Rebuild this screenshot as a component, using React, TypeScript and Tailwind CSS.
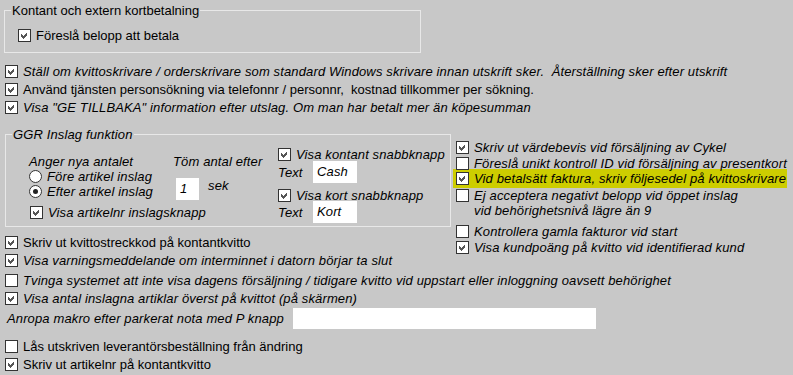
import type { ReactNode } from 'react'

function Box({ checked }: { checked?: boolean }) {
  return (
    <span className="flex h-[13px] w-[13px] shrink-0 items-center justify-center border border-[#333333] bg-white">
      {checked && (
        <svg width="7" height="7" viewBox="0 0 7 7" shapeRendering="crispEdges">
          <polygon points="0,2 2,4 6,0 6,3 2,7 0,5" fill="#555555" />
        </svg>
      )}
    </span>
  )
}

function Radio({ selected }: { selected?: boolean }) {
  return (
    <span className="flex h-[13px] w-[13px] shrink-0 items-center justify-center rounded-full border border-[#333333] bg-white">
      {selected && <span className="h-[5px] w-[5px] rounded-full bg-[#222222]" />}
    </span>
  )
}

function Row({
  checked,
  italic,
  className = 'h-[18px]',
  children,
}: {
  checked?: boolean
  italic?: boolean
  className?: string
  children: ReactNode
}) {
  return (
    <div className={`flex items-center gap-[5px] ${className}`}>
      <Box checked={checked} />
      <span className={`whitespace-pre ${italic ? 'italic tracking-[0.13px]' : ''}`}>{children}</span>
    </div>
  )
}

export default function App() {
  return (
    <div className="h-[375px] w-[793px] overflow-hidden bg-[#c8c8c8] pt-[3px] font-['Liberation_Sans',Arial,sans-serif] text-[13px] leading-[15px] text-black">
      {/* Kontant och extern kortbetalning */}
      <fieldset className="ml-[4px] h-[50px] w-[417px] border border-[#e8e8e8]">
        <legend className="ml-[6px] px-[1px]">Kontant och extern kortbetalning</legend>
        <div className="pl-[13px] pt-[8px]">
          <Row checked>Föreslå belopp att betala</Row>
        </div>
      </fieldset>

      <div className="mt-[9px] pl-[5px]">
        <Row checked italic>
          Ställ om kvittoskrivare / orderskrivare som standard Windows skrivare innan utskrift sker.  Återställning sker efter utskrift
        </Row>
        <Row checked>Använd tjänsten personsökning via telefonnr / personnr,  kostnad tillkommer per sökning.</Row>
        <Row checked italic>
          Visa "GE TILLBAKA" information efter utslag. Om man har betalt mer än köpesumman
        </Row>
      </div>

      <div className="flex">
        {/* left column */}
        <div className="w-[451px] pl-[5px]">
          <fieldset className="mt-[11px] h-[100px] w-[446px] border border-[#e8e8e8]">
            <legend className="ml-[6px] px-[1px] italic tracking-[0.13px]">GGR Inslag funktion</legend>
            <div className="flex italic tracking-[0.13px]">
              <div className="w-[272px] pl-[23px]">
                <div className="flex">
                  <div className="w-[144px] pt-[12px]">
                    <div className="h-[15px]">Anger nya antalet</div>
                    <div className="flex h-[15px] items-center gap-[5px]">
                      <Radio />
                      <span>Före artikel inslag</span>
                    </div>
                    <div className="flex h-[15px] items-center gap-[5px]">
                      <Radio selected />
                      <span>Efter artikel inslag</span>
                    </div>
                  </div>
                  <div className="pt-[12px]">
                    <div className="h-[15px]">Töm antal efter</div>
                    <div className="mt-[9px] flex items-start">
                      <div className="ml-[3px] h-[22px] w-[23px] bg-white pl-[4px] leading-[22px]">1</div>
                      <span className="ml-[9px]">sek</span>
                    </div>
                  </div>
                </div>
                <div className="mt-[3px] pl-[1px]">
                  <Row checked italic>
                    Visa artikelnr inslagsknapp
                  </Row>
                </div>
              </div>
              <div className="pt-[4px]">
                <Row checked italic className="h-[16px]">
                  Visa kontant snabbknapp
                </Row>
                <div className="-mt-[1px] flex h-[22px] items-center">
                  <span className="w-[35px]">Text</span>
                  <div className="h-[22px] w-[44px] bg-white pl-[4px] leading-[22px]">Cash</div>
                </div>
                <Row checked italic className="mt-[4px] h-[16px]">
                  Visa kort snabbknapp
                </Row>
                <div className="-mt-[2px] flex h-[22px] items-center">
                  <span className="w-[35px]">Text</span>
                  <div className="h-[22px] w-[44px] bg-white pl-[4px] leading-[22px]">Kort</div>
                </div>
              </div>
            </div>
          </fieldset>
          <div className="mt-[6px]">
            <Row checked>Skriv ut kvittostreckkod på kontantkvitto</Row>
            <Row checked italic>
              Visa varningsmeddelande om interminnet i datorn börjar ta slut
            </Row>
          </div>
        </div>

        {/* right column */}
        <div className="w-[342px] pl-[2px] pt-[23px] italic tracking-[0.13px]">
          <div className="pl-[3px]">
            <Row checked italic className="h-[16px]">
              Skriv ut värdebevis vid försäljning av Cykel
            </Row>
            <Row italic className="h-[16px]">
              Föreslå unikt kontroll ID vid försäljning av presentkort
            </Row>
          </div>
          <div className="-mt-[2px] w-[334px] bg-[#cdcd00] pl-[3px]">
            <Row checked italic className="h-[19px]">
              Vid betalsätt faktura, skriv följesedel på kvittoskrivare
            </Row>
          </div>
          <div className="pl-[3px]">
            <div className="flex items-start gap-[5px]">
              <span className="mt-[1px]">
                <Box />
              </span>
              <div>
                <div>Ej acceptera negativt belopp vid öppet inslag</div>
                <div>vid behörighetsnivå lägre än 9</div>
              </div>
            </div>
            <Row italic className="mt-[5px] h-[16px]">
              Kontrollera gamla fakturor vid start
            </Row>
            <Row checked italic className="h-[16px]">
              Visa kundpoäng på kvitto vid identifierad kund
            </Row>
          </div>
        </div>
      </div>

      <div className="mt-[2px] pl-[5px]">
        <Row italic>
          Tvinga systemet att inte visa dagens försäljning / tidigare kvitto vid uppstart eller inloggning oavsett behörighet
        </Row>
        <Row checked italic>
          Visa antal inslagna artiklar överst på kvittot (på skärmen)
        </Row>
      </div>
      <div className="mt-[1px] flex h-[21px] items-center pl-[7px]">
        <span className="w-[286px] italic tracking-[0.13px]">Anropa makro efter parkerat nota med P knapp</span>
        <div className="h-[21px] w-[303px] bg-white" />
      </div>
      <div className="mt-[8px] pl-[5px]">
        <Row>Lås utskriven leverantörsbeställning från ändring</Row>
        <Row checked>Skriv ut artikelnr på kontantkvitto</Row>
      </div>
    </div>
  )
}
